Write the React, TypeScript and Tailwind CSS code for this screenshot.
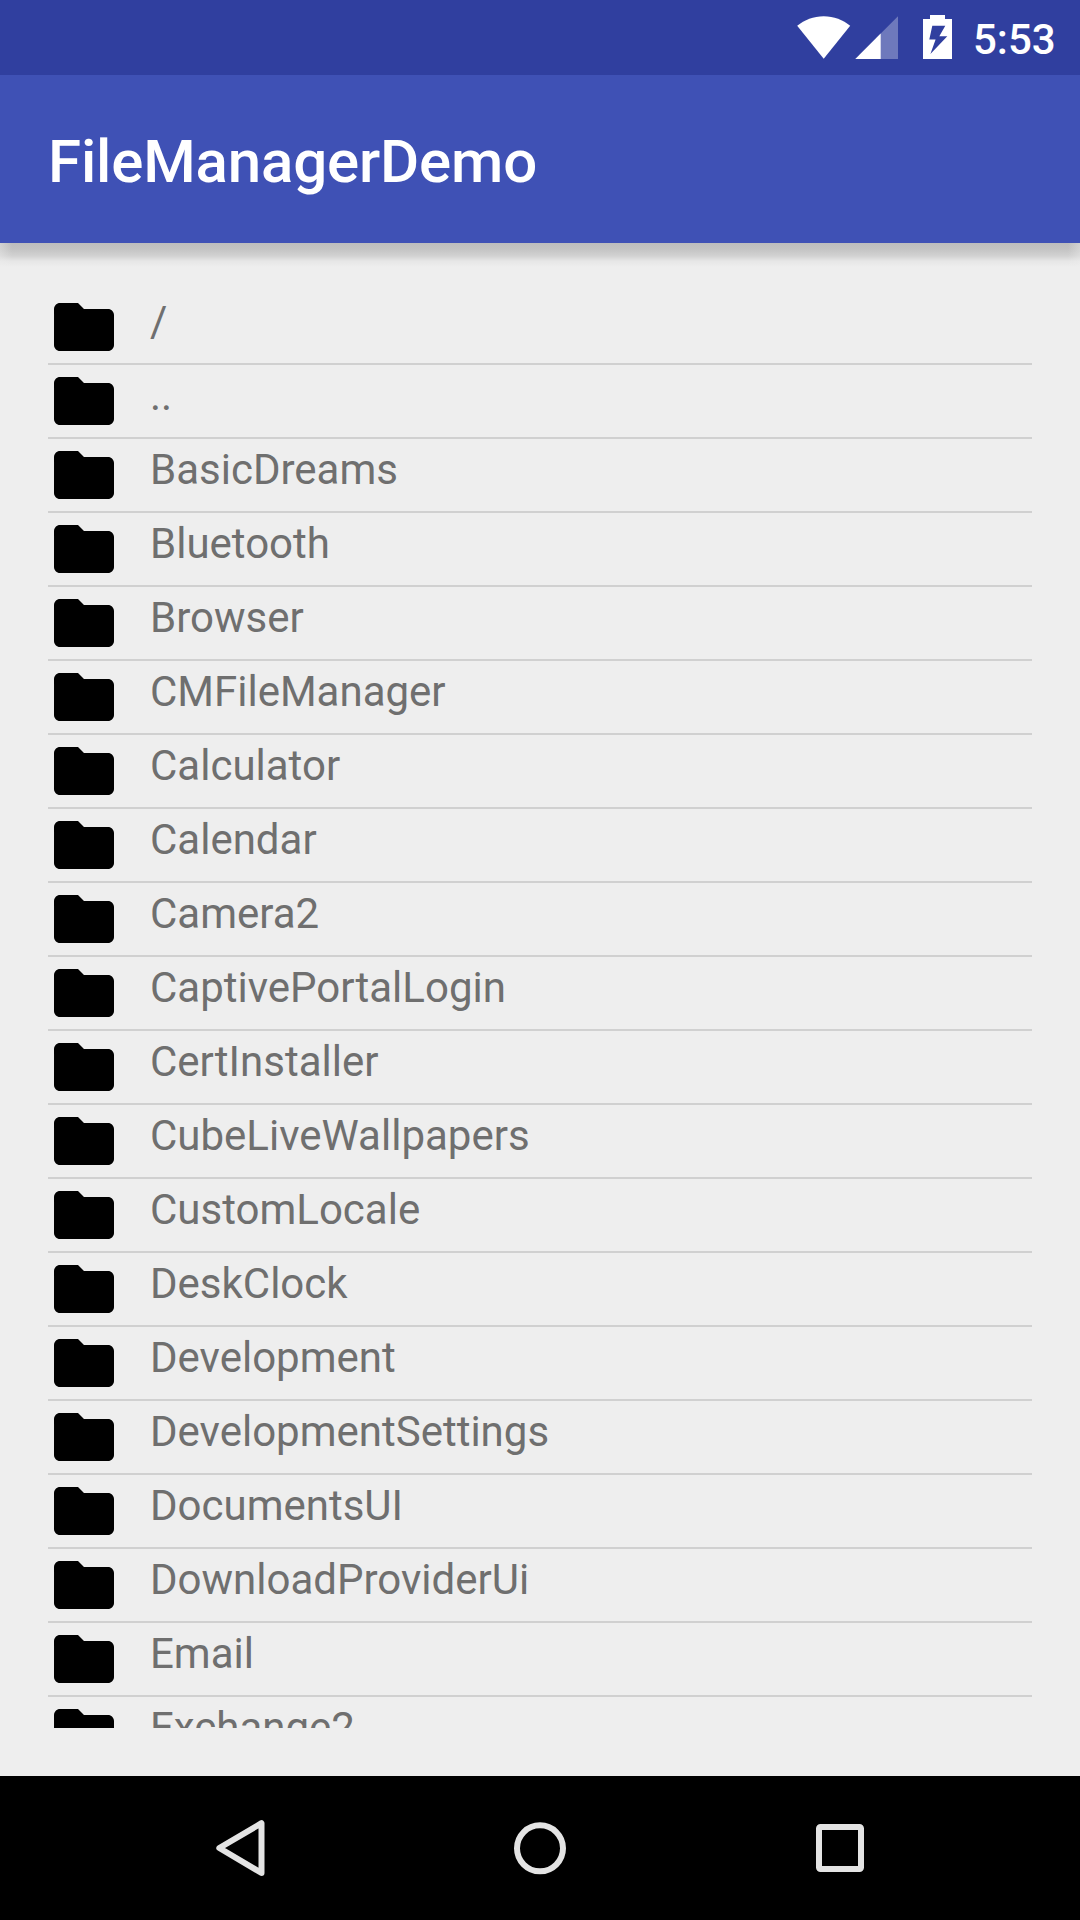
const folders = [
  '/', '..', 'BasicDreams', 'Bluetooth', 'Browser', 'CMFileManager', 'Calculator', 'Calendar',
  'Camera2', 'CaptivePortalLogin', 'CertInstaller', 'CubeLiveWallpapers', 'CustomLocale',
  'DeskClock', 'Development', 'DevelopmentSettings', 'DocumentsUI', 'DownloadProviderUi',
  'Email', 'Exchange2',
];

function StatusBar() {
  return (
    <div className="flex h-[75px] shrink-0 items-start justify-end bg-[#303f9f] pr-[25px] text-white">
      <svg className="mt-4 h-[43px] w-[54px]" viewBox="0 0 54 43" fill="currentColor">
        <path d="M0.2 9.8C7.5 3.8 16.5 0.2 26.7 0.2S46 3.8 53.2 9.8L26.7 42.8Z" />
      </svg>
      <svg className="ml-1 mt-4 h-[43px] w-[43px]" viewBox="0 0 43 43" fill="currentColor">
        <path d="M0.3 43L43 0.3V43Z" opacity="0.3" />
        <path d="M0.3 43L25.7 17.6V43Z" />
      </svg>
      <svg className="ml-[25px] mt-[15px] h-11 w-[29px]" viewBox="0 0 29 44" fill="currentColor">
        <path fillRule="evenodd" d="M7 0H22V4H29V44H0V4H7ZM9.3 10.8L6.3 24.4H12.6L7.4 39L24.3 21.2H16.3L22.3 10.8Z" />
      </svg>
      <span className="ml-[21px] mt-[15px] w-[82px] whitespace-nowrap text-[42px] font-medium leading-[49px]">5:53</span>
    </div>
  );
}

function FolderRow({ name }: { name: string }) {
  return (
    <li className="flex h-[74px] shrink-0 items-start border-b-2 border-[#d0d0d0]">
      <svg className="size-[72px] shrink-0" viewBox="0 0 24 24" fill="#000">
        <path d="M10 4H4c-1.1 0-1.99.9-1.99 2L2 18c0 1.1.9 2 2 2h16c1.1 0 2-.9 2-2V8c0-1.1-.9-2-2-2h-8l-2-2z" />
      </svg>
      <span className="ml-[30px] mt-[6px] text-[42px] leading-[49px] text-[#6f6f6f]">{name}</span>
    </li>
  );
}

function NavigationBar() {
  return (
    <nav className="flex h-36 shrink-0 items-center justify-center gap-[228px] bg-black">
      <svg className="size-[72px]" viewBox="0 0 72 72" fill="none" stroke="#e4e4e4" strokeWidth="6" strokeLinejoin="round">
        <path d="M15.3 36L57.5 11.2V61Z" />
      </svg>
      <svg className="size-[72px]" viewBox="0 0 72 72" fill="none" stroke="#e4e4e4" strokeWidth="6">
        <circle cx="36" cy="36.3" r="23" />
      </svg>
      <svg className="size-[72px]" viewBox="0 0 72 72" fill="none" stroke="#e4e4e4" strokeWidth="6">
        <rect x="15" y="15" width="42" height="42" rx="1.5" />
      </svg>
    </nav>
  );
}

export default function App() {
  return (
    <div className="flex h-[1920px] w-[1080px] flex-col overflow-hidden bg-[#eeeeee] font-['Roboto',sans-serif]">
      <StatusBar />
      <header className="relative flex h-[168px] shrink-0 items-center bg-[#3f51b5] px-12">
        <h1 className="mt-[5px] text-[60px] font-medium leading-[70px] tracking-[-0.15px] text-white">FileManagerDemo</h1>
        <div className="absolute inset-x-0 top-full flex h-6 justify-between bg-[linear-gradient(to_bottom,#bdbdbd_0px,#c3c3c3_6px,#d2d2d2_13px,#e6e6e6_18px,#eeeeee_24px)]">
          <div className="w-3 bg-linear-to-r from-[#eeeeee]/40 to-[#eeeeee]/0" />
          <div className="w-3 bg-linear-to-l from-[#eeeeee]/40 to-[#eeeeee]/0" />
        </div>
      </header>
      <main className="min-h-0 grow p-12">
        <ul className="flex h-full flex-col overflow-hidden">
          {folders.map((name) => (
            <FolderRow key={name} name={name} />
          ))}
        </ul>
      </main>
      <NavigationBar />
    </div>
  );
}
